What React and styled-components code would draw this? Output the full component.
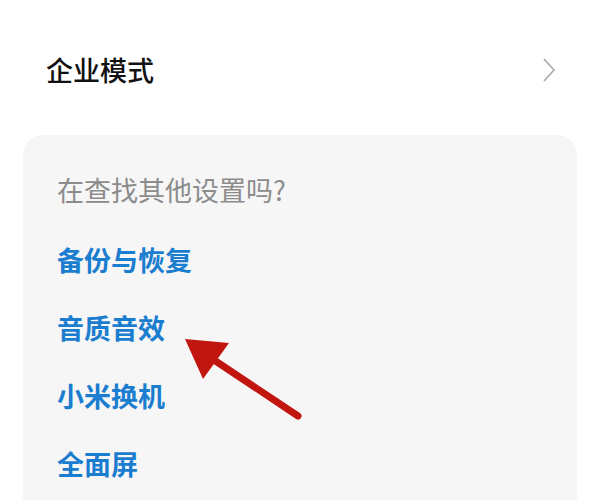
import styled, { createGlobalStyle } from "styled-components";

const GlobalStyle = createGlobalStyle`
  html, body {
    margin: 0;
    padding: 0;
    background: #ffffff;
  }
  body {
    font-family: "Noto Sans CJK SC", "Noto Sans", sans-serif;
  }
`;

const links = ["备份与恢复", "音质音效", "小米换机", "全面屏"];

const App = () => {
  return (
    <Page>
      <GlobalStyle />
      <SettingRow>
        <RowTitle>企业模式</RowTitle>
        <Chevron viewBox="0 0 14 26">
          <path d="M2 2 L12 13 L2 24" />
        </Chevron>
      </SettingRow>
      <Card>
        <Hint>在查找其他设置吗?</Hint>
        <LinkList>
          {links.map((label) => (
            <LinkItem key={label}>{label}</LinkItem>
          ))}
        </LinkList>
      </Card>
      <Arrow viewBox="0 0 150 120">
        <line x1="128" y1="96" x2="32" y2="32" />
        <polygon points="15,19 59,23 33,59" />
      </Arrow>
    </Page>
  );
};

export default App;

const Page = styled.div`
  position: relative;
  width: 600px;
  height: 500px;
  overflow: hidden;
`;

const SettingRow = styled.div`
  display: flex;
  align-items: flex-start;
  justify-content: space-between;
  height: 135px;
  padding: 52px 44px 0 46px;
  box-sizing: border-box;
`;

const RowTitle = styled.div`
  font-size: 27px;
  font-weight: 500;
  color: #111111;
  line-height: 36px;
`;

const Chevron = styled.svg`
  width: 14px;
  height: 26px;
  margin-top: 5px;
  fill: none;
  stroke: #a8a8a8;
  stroke-width: 1.6;
`;

const Card = styled.div`
  margin: 0 23px;
  background: #f6f6f6;
  border-radius: 20px;
  padding: 36px 34px 40px;
  height: 400px;
  box-sizing: border-box;
`;

const Hint = styled.div`
  font-size: 27px;
  color: #8c8c8c;
  line-height: 38px;
`;

const LinkList = styled.div`
  display: flex;
  flex-direction: column;
  gap: 30px;
  margin-top: 32px;
`;

const LinkItem = styled.div`
  font-size: 27px;
  font-weight: 700;
  color: #1a7dcf;
  line-height: 38px;
`;

const Arrow = styled.svg`
  position: absolute;
  left: 170px;
  top: 320px;
  width: 150px;
  height: 120px;
  line {
    stroke: #c0160f;
    stroke-width: 7;
    stroke-linecap: round;
  }
  polygon {
    fill: #c0160f;
  }
`;
